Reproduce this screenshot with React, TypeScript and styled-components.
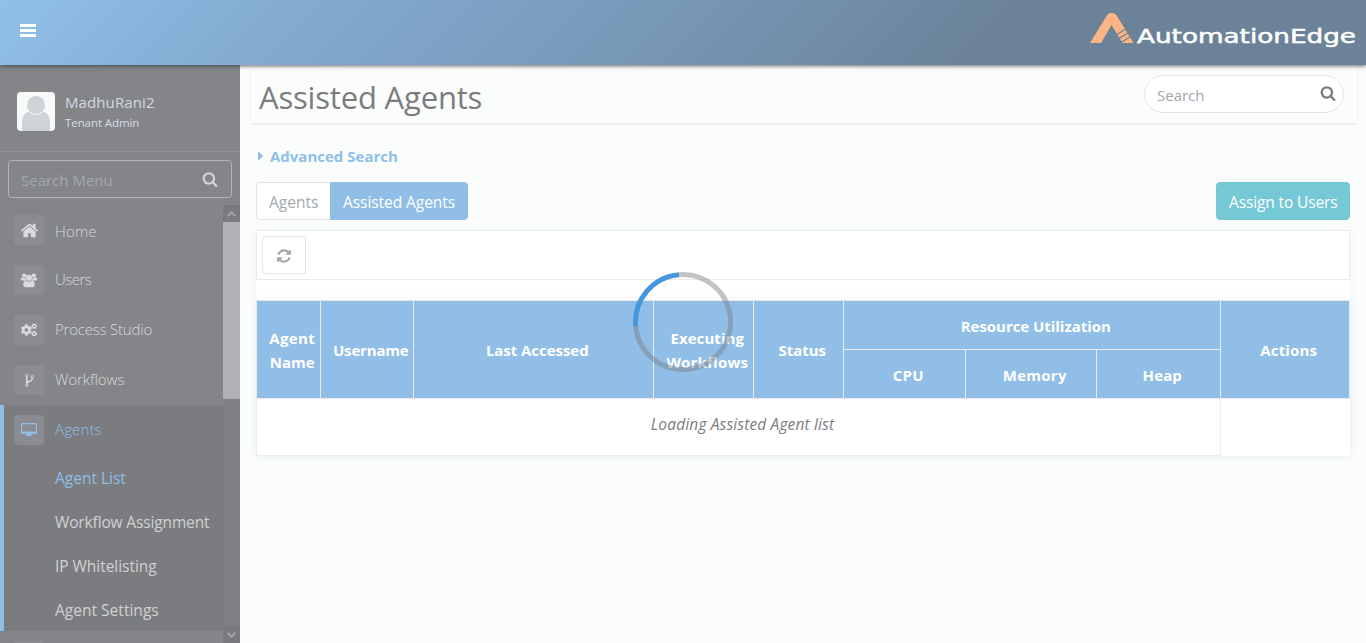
import React from "react";
import styled, { createGlobalStyle, css } from "styled-components";
import { FaCogs } from "react-icons/fa";

const sky = "#90bee7";

const GlobalStyle = createGlobalStyle`
  * { box-sizing: border-box; }
  body {
    margin: 0;
    overflow: hidden;
    background: #fbfdfd;
    font: 400 15px/24px "Open Sans", "Noto Sans", sans-serif;
    color: #7b7c7f;
  }
  svg { display: block; }
`;

const Page = styled.div`
  display: flex;
  flex-direction: column;
  height: 643px;
  overflow: hidden;
`;

const Header = styled.header`
  position: relative;
  z-index: 2;
  flex: none;
  display: flex;
  justify-content: space-between;
  height: 65px;
  padding: 0 9px 0 20px;
  background: linear-gradient(135deg, #90c0e9 0%, #86b0d6 16%, #82a8cf 24%, #7a9dbd 42%, #6b8299 72%);
  box-shadow: 0 1px 4px rgba(50, 50, 50, 0.75);
`;

const MenuButton = styled.div`
  display: flex;
  flex-direction: column;
  gap: 2px;
  width: 16px;
  padding-top: 24px;
`;

const MenuBar = styled.span`
  height: 3px;
  background: #fff;
`;

const Logo = styled.svg`
  margin-top: 12px;
`;

const Body = styled.div`
  display: flex;
  flex: 1;
  min-height: 0;
`;

const Sidebar = styled.aside`
  display: flex;
  flex-direction: column;
  flex: none;
  width: 240px;
  background: #838589;
`;

const Profile = styled.div`
  flex: none;
  display: flex;
  gap: 10px;
  height: 87px;
  padding: 27px 17px 0;
  border-bottom: 1px solid #8f9195;
`;

const Avatar = styled.svg`
  border-radius: 4px;
  background: #f8f9f9;
`;

const UserName = styled.div`
  padding-top: 1px;
  line-height: 19px;
  letter-spacing: 0.1px;
  color: #d4d8e0;
`;

const UserRole = styled.div`
  padding-top: 2px;
  font-size: 11.5px;
  line-height: 18px;
  letter-spacing: -0.08px;
  color: #d9dde4;
`;

const MenuSearch = styled.div`
  flex: none;
  display: flex;
  align-items: center;
  justify-content: space-between;
  height: 38px;
  margin: 8px 8px 7px;
  padding: 2px 13px 0 12px;
  border: 1px solid #b2b3b6;
  border-radius: 4px;
  color: #a5a8ac;

  svg { color: #d3d3d4; margin-top: -3px; }
`;

const NavArea = styled.div`
  display: flex;
  flex: 1;
  min-height: 0;
`;

const NavList = styled.nav`
  flex: 1;
  overflow: hidden;
`;

const NavGroup = styled.div<{ $open?: boolean }>`
  ${p => p.$open && css`
    background: #7b7c7f;
    box-shadow: inset 4px 0 0 ${sky};
  `}
`;

const NavRow = styled.div<{ $active?: boolean; $spacing?: number }>`
  display: flex;
  align-items: center;
  gap: 11px;
  height: 50px;
  padding-left: 14px;
  font-weight: 330;
  letter-spacing: ${p => p.$spacing ?? 0}px;
  color: ${p => (p.$active ? sky : "#d9dadb")};
`;

const NavIcon = styled.span`
  display: grid;
  place-items: center;
  width: 30px;
  height: 30px;
  border-radius: 4px;
  background: #8a8c91;
`;

const NavText = styled.span<{ $lower?: boolean }>`
  padding-top: ${p => (p.$lower ? 2 : 0)}px;
  margin-top: ${p => (p.$lower ? 0 : -2)}px;
`;

const SubRow = styled.div<{ $active?: boolean; $spacing: number }>`
  height: 44px;
  padding-left: 55px;
  font-size: 15.5px;
  line-height: 46px;
  letter-spacing: ${p => p.$spacing}px;
  color: ${p => (p.$active ? sky : "#d0d1d2")};
`;

const Scrollbar = styled.div`
  display: flex;
  flex-direction: column;
  width: 17px;
  background: #7e7f83;
`;

const ScrollButton = styled.div`
  display: grid;
  place-items: center;
  height: 17px;
  background: #797a7e;
  color: #a5a6a9;
`;

const Thumb = styled.div`
  height: 177px;
  margin-bottom: auto;
  background: #b0b1b4;
`;

const Main = styled.main`
  flex: 1;
  padding: 0 9px 0 11px;
`;

const TitleBar = styled.div`
  display: flex;
  justify-content: space-between;
  height: 58px;
  padding: 10px 13px 0 8px;
  box-shadow: 0 1px 2px rgba(0, 0, 0, 0.12);
`;

const Title = styled.h1`
  margin: 0;
  font-size: 31px;
  font-weight: 400;
  line-height: 44px;
  letter-spacing: -0.18px;
`;

const SearchPill = styled.div`
  display: flex;
  align-items: center;
  justify-content: space-between;
  width: 200px;
  height: 38px;
  padding: 2px 7px 0 12px;
  border: 1px solid #e2e5ea;
  border-radius: 19px;
  background: #fff;
  color: #a2a6ab;

  svg { color: #7b7c7f; margin-top: -4px; }
`;

const Content = styled.div`
  padding: 21px 7px 0 5px;
`;

const Advanced = styled.div`
  display: flex;
  align-items: center;
  gap: 7px;
  height: 24px;
  padding-left: 2px;
  font-weight: 700;
  color: ${sky};
`;

const Caret = styled.span`
  width: 0;
  height: 0;
  border: solid transparent;
  border-width: 5px 0 5px 5px;
  border-left-color: ${sky};
`;

const Actions = styled.div`
  display: flex;
  margin: 14px 0 10px;
`;

const Button = styled.div<{ $kind: "plain" | "active" | "assign" }>`
  height: 38px;
  font-size: 15.5px;
  line-height: 39px;
  padding: 0 12px;
  border: 1px solid;
  white-space: nowrap;
  ${p => p.$kind === "plain" && css`
    width: 74px;
    border-color: #e2e4e8;
    border-right: 0;
    border-radius: 4px 0 0 4px;
    background: #fff;
    color: #a3a7ac;
  `}
  ${p => p.$kind === "active" && css`
    width: 138px;
    border-color: ${sky};
    border-radius: 0 4px 4px 0;
    background: ${sky};
    color: #fff;
    letter-spacing: -0.06px;
  `}
  ${p => p.$kind === "assign" && css`
    width: 134px;
    margin-left: auto;
    border-color: #75c8d5;
    border-radius: 4px;
    background: #75c8d5;
    color: #fff;
    letter-spacing: -0.13px;
  `}
`;

const Panel = styled.section`
  background: #fff;
  box-shadow: 0 0 10px rgba(90, 100, 130, 0.07);
`;

const Toolbar = styled.div`
  height: 50px;
  padding: 5px;
  border: 1px solid #eaecec;
`;

const RefreshButton = styled.div`
  display: grid;
  place-items: center;
  width: 44px;
  height: 38px;
  padding-top: 2px;
  border: 1px solid #e2e4e8;
  border-radius: 4px 0 0 4px;
  color: #a3a7ac;
`;

const Table = styled.div`
  display: grid;
  grid-template-columns: 64px 93px 240px 100px 90px 122px 131px 124px 129px;
  grid-template-rows: 49px 49px 57px;
  margin-top: 20px;
  padding: 1px 0 0 1px;
  background: linear-gradient(#eaecec, #eaecec) 0 0 / 100% 1px no-repeat, linear-gradient(#eaecec, #eaecec) 0 0 / 1px 100% no-repeat;
  box-shadow: 0 0 8px rgba(90, 100, 130, 0.06);
`;

const HeadCell = styled.div<{ $area: string; $spacing?: number }>`
  grid-area: ${p => p.$area};
  display: flex;
  flex-direction: column;
  align-items: center;
  justify-content: center;
  padding: 1px 4.5px 0 12px;
  border: solid #e9edf0;
  border-width: 0 1px 1px 0;
  background: ${sky};
  font-weight: 700;
  letter-spacing: ${p => p.$spacing ?? 0}px;
  white-space: nowrap;
  color: #fff;
`;

const Word = styled.span<{ $spacing: number }>`
  letter-spacing: ${p => p.$spacing}px;
`;

const LoadingCell = styled.div`
  grid-area: 3 / 1 / 4 / 9;
  padding: 13px 4px 0 12px;
  border: solid #eaecec;
  border-width: 0 1px 1px 0;
  background: #fff;
  font-size: 15.5px;
  font-style: italic;
  letter-spacing: 0.15px;
  text-align: center;
`;

const EmptyCell = styled.div`
  grid-area: 3 / 9 / 4 / 10;
  background: #fff;
`;

const Spinner = styled.svg`
  position: fixed;
  left: 633px;
  top: 272px;
  z-index: 5;
`;

const paths = {
  search: "M1216 832q0-185-131.5-316.5t-316.5-131.5-316.5 131.5-131.5 316.5 131.5 316.5 316.5 131.5 316.5-131.5 131.5-316.5zm512 832q0 52-38 90t-90 38q-54 0-90-38l-343-342q-179 124-399 124-143 0-273.5-55.5t-225-150-150-225-55.5-273.5 55.5-273.5 150-225 225-150 273.5-55.5 273.5 55.5 225 150 150 225 55.5 273.5q0 220-124 399l343 343q37 37 37 90z",
  home: "M1472 992v480q0 26-19 45t-45 19h-384v-384h-256v384h-384q-26 0-45-19t-19-45v-480q0-1 .5-3t.5-3l575-474 575 474q1 2 1 6zm223-69l-62 74q-8 9-21 11h-3q-13 0-21-7l-692-577-692 577q-12 8-24 7-13-2-21-11l-62-74q-8-10-7-23.5t11-21.5l719-599q32-26 76-26t76 26l244 204v-195q0-14 9-23t23-9h192q14 0 23 9t9 23v408l219 182q10 8 11 21.5t-7 23.5z",
  refresh: "M1639 1056q0 5-1 7-64 268-268 434.5t-478 166.5q-146 0-282.5-55t-243.5-157l-129 129q-19 19-45 19t-45-19-19-45v-448q0-26 19-45t45-19h448q26 0 45 19t19 45-19 45l-137 137q71 66 161 102t187 36q134 0 250-65t186-179q11-17 53-117 8-23 30-23h192q13 0 22.5 9.5t9.5 22.5zm25-800v448q0 26-19 45t-45 19h-448q-26 0-45-19t-19-45 19-45l138-138q-148-137-349-137-134 0-250 65t-186 179q-11 17-53 117-8 23-30 23h-199q-13 0-22.5-9.5t-9.5-22.5v-7q65-268 270-434.5t480-166.5q146 0 284 55.5t245 156.5l130-129q19-19 45-19t45 19 19 45z",
  fork: "M672 1472q0-40-28-68t-68-28-68 28-28 68 28 68 68 28 68-28 28-68zm0-1152q0-40-28-68t-68-28-68 28-28 68 28 68 68 28 68-28 28-68zm640 128q0-40-28-68t-68-28-68 28-28 68 28 68 68 28 68-28 28-68zm96 0q0 52-26 96.5t-70 69.5q-2 287-226 414-67 38-203 81-128 40-169.5 71t-41.5 100v26q44 25 70 69.5t26 96.5q0 80-56 136t-136 56-136-56-56-136q0-52 26-96.5t70-69.5v-820q-44-25-70-69.5t-26-96.5q0-80 56-136t136-56 136 56 56 136q0 52-26 96.5t-70 69.5v497q54-26 154-57 55-17 87.5-29.5t70.5-31 59-39.5 40.5-51 28-69.5 8.5-91.5q-44-25-70-69.5t-26-96.5q0-80 56-136t136-56 136 56 56 136z",
};

function Glyph({ name, size }: { name: keyof typeof paths; size: number }) {
  return (
    <svg width={size} height={size} viewBox="0 0 1792 1792" fill="currentColor">
      <path d={paths[name]} />
    </svg>
  );
}

function People() {
  return (
    <svg width="16" height="15" viewBox="0 0 16 15" fill="currentColor">
      <circle cx="3.200" cy="2.500" r="2.100" />
      <circle cx="12.800" cy="2.500" r="2.100" />
      <circle cx="8" cy="4.800" r="3.100" />
      <path d="M1.500 4.300Q3 5.400 4.300 4.500 4.300 6.300 5.200 7.400H1.600Q0 7.400 0 6.200 0 4.200.6 4.200zM14.500 4.300Q13 5.400 11.700 4.500 11.700 6.300 10.800 7.400H14.400Q16 7.400 16 6.200 16 4.200 15.400 4.200zM5 7.500Q8 10 11 7.500 13.700 7.500 13.700 12.200 13.700 14.300 11.800 14.300H4.200Q2.300 14.300 2.300 12.200 2.300 7.500 5 7.500z" />
    </svg>
  );
}

function Monitor() {
  return (
    <svg width="16" height="14" viewBox="0 0 16 14" fill="currentColor">
      <path fillRule="evenodd" d="M1.400 0h13.200Q16 0 16 1.400v8.200Q16 11 14.600 11H10.500v.8q.8.2.8 1.200H4.700q0-1 .8-1.200V11H1.400Q0 11 0 9.600V1.400Q0 0 1.400 0zM1.200 1.200v7.300h13.600V1.200z" />
    </svg>
  );
}

function Chevron({ down }: { down?: boolean }) {
  return (
    <svg width="9" height="6" viewBox="0 0 9 6" fill="none" stroke="currentColor" strokeWidth="2">
      <path d={down ? "M.7.8 4.500 4.600 8.300.8" : "M.7 5.200 4.500 1.400 8.300 5.200"} />
    </svg>
  );
}

const navItems = [
  { label: "Home", icon: <Glyph name="home" size={19} />, spacing: 0.15 },
  { label: "Users", icon: <People />, spacing: -0.5 },
  { label: "Process Studio", icon: <FaCogs size={16} />, spacing: -0.2 },
  { label: "Workflows", icon: <Glyph name="fork" size={15} />, spacing: -0.05 },
];

const agentItems = [
  { label: "Agent List", spacing: 0 },
  { label: "Workflow Assignment", spacing: -0.14 },
  { label: "IP Whitelisting", spacing: -0.04 },
  { label: "Agent Settings", spacing: 0.02 },
];

const headCells = [
  { label: "Username", area: "1 / 2 / 3 / 3", spacing: -0.17 },
  { label: "Last Accessed", area: "1 / 3 / 3 / 4", spacing: -0.05 },
  { label: "Status", area: "1 / 5 / 3 / 6", spacing: -0.05 },
  { label: "Resource Utilization", area: "1 / 6 / 2 / 9", spacing: -0.04 },
  { label: "CPU", area: "2 / 6 / 3 / 7", spacing: 0.3 },
  { label: "Memory", area: "2 / 7 / 3 / 8", spacing: 0.25 },
  { label: "Heap", area: "2 / 8 / 3 / 9", spacing: 0.1 },
  { label: "Actions", area: "1 / 9 / 3 / 10", spacing: 0.15 },
];

export default function App() {
  return (
    <Page>
      <GlobalStyle />
      <Header>
        <MenuButton><MenuBar /><MenuBar /><MenuBar /></MenuButton>
        <Logo width="267" height="40" viewBox="0 0 267 40">
          <path d="M0 31 16.500 4Q18 1 21.500 1T27 4L43.500 31H32.500L21.500 13 11 31Z" fill="#fbb584" />
          <path d="M27 22.500 37 16.300M29 26.500 39.500 20M31 30.500 41.500 24" stroke="#6b8299" strokeWidth="1.3" />
          <text x="47" y="31" textLength="219" lengthAdjust="spacingAndGlyphs" fontFamily="DejaVu Sans" fontSize="19" fill="#fff" stroke="#fff" strokeWidth="0.5">AutomationEdge</text>
        </Logo>
      </Header>
      <Body>
        <Sidebar>
          <Profile>
            <Avatar width="38" height="39" viewBox="0 0 38 39" fill="#ced3d7">
              <path d="M5 39V32Q5 20 13 20H25Q33 20 33 32V39Z" />
              <circle cx="19" cy="13" r="9.500" stroke="#f8f9f9" />
            </Avatar>
            <div>
              <UserName>MadhuRani2</UserName>
              <UserRole>Tenant Admin</UserRole>
            </div>
          </Profile>
          <MenuSearch>Search Menu<Glyph name="search" size={16} /></MenuSearch>
          <NavArea>
            <NavList>
              {navItems.map((item, i) => (
                <NavRow key={item.label} $spacing={item.spacing}>
                  <NavIcon>{item.icon}</NavIcon>
                  <NavText $lower={i === 0}>{item.label}</NavText>
                </NavRow>
              ))}
              <NavGroup $open>
                <NavRow $active $spacing={0.12}>
                  <NavIcon><Monitor /></NavIcon>
                  <NavText>Agents</NavText>
                </NavRow>
                {agentItems.map((item, i) => (
                  <SubRow key={item.label} $active={i === 0} $spacing={item.spacing}>{item.label}</SubRow>
                ))}
              </NavGroup>
              <NavRow><NavIcon /></NavRow>
            </NavList>
            <Scrollbar>
              <ScrollButton><Chevron /></ScrollButton>
              <Thumb />
              <ScrollButton><Chevron down /></ScrollButton>
            </Scrollbar>
          </NavArea>
        </Sidebar>
        <Main>
          <TitleBar>
            <Title>Assisted Agents</Title>
            <SearchPill>Search<Glyph name="search" size={16} /></SearchPill>
          </TitleBar>
          <Content>
            <Advanced><Caret />Advanced Search</Advanced>
            <Actions>
              <Button $kind="plain">Agents</Button>
              <Button $kind="active">Assisted Agents</Button>
              <Button $kind="assign">Assign to Users</Button>
            </Actions>
            <Panel>
              <Toolbar>
                <RefreshButton><Glyph name="refresh" size={16} /></RefreshButton>
              </Toolbar>
              <Table>
                <HeadCell $area="1 / 1 / 3 / 2">
                  <Word $spacing={0.35}>Agent</Word>
                  <Word $spacing={0}>Name</Word>
                </HeadCell>
                <HeadCell $area="1 / 4 / 3 / 5">
                  <Word $spacing={0.08}>Executing</Word>
                  <Word $spacing={0.2}>Workflows</Word>
                </HeadCell>
                {headCells.map(cell => (
                  <HeadCell key={cell.label} $area={cell.area} $spacing={cell.spacing}>{cell.label}</HeadCell>
                ))}
                <LoadingCell>Loading Assisted Agent list</LoadingCell>
                <EmptyCell />
              </Table>
            </Panel>
          </Content>
        </Main>
      </Body>
      <Spinner width="100" height="100" viewBox="0 0 100 100" fill="none" strokeWidth="5">
        <path d="M46 2.700A47.500 47.500 0 1 1 2.700 54" stroke="#797c80" strokeOpacity="0.45" />
        <path d="M2.700 54A47.500 47.500 0 0 1 46 2.700" stroke="#4795da" />
      </Spinner>
    </Page>
  );
}
